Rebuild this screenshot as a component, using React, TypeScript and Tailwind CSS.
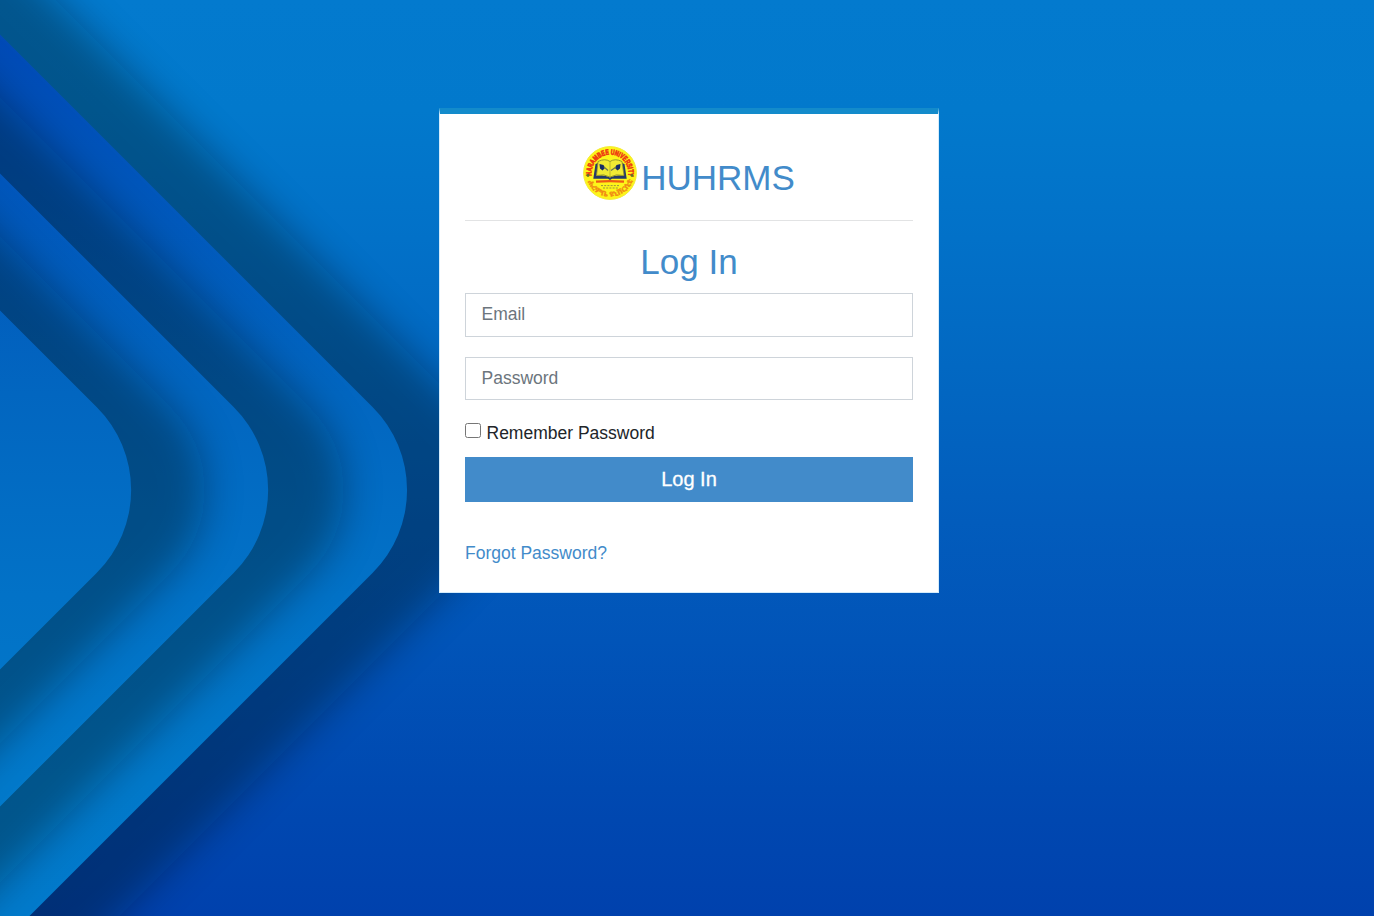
import React from "react";

// `cast` is how far to the right each chevron throws its shadow.
const CHEVRONS = [
  { id: "outer", apex: 455.5, cast: 90 },
  { id: "middle", apex: 316.6, cast: 76 },
  { id: "inner", apex: 179.6, cast: 74 },
];

// A right-pointing corner, rounded with a radius of 117, closed far off to the left.
function chevronPath(apex: number) {
  const tx = apex - 83;
  return `M${apex - 900} -410 L${tx} 407 A117 117 0 0 1 ${tx} 573 L${apex - 900} 1390 Z`;
}

function Backdrop() {
  return (
    <svg className="absolute inset-0 h-[916px] w-[1374px]" viewBox="0 0 1374 916" aria-hidden="true">
      <defs>
        <linearGradient id="sky" gradientUnits="userSpaceOnUse" x1="0" y1="0" x2="0" y2="916">
          <stop offset="0" stopColor="#037ace" />
          <stop offset="0.12" stopColor="#0279cc" />
          <stop offset="0.26" stopColor="#0271c8" />
          <stop offset="0.4" stopColor="#0268c2" />
          <stop offset="0.57" stopColor="#025cbc" />
          <stop offset="0.7" stopColor="#0154b8" />
          <stop offset="0.86" stopColor="#0049b1" />
          <stop offset="1" stopColor="#0041ad" />
        </linearGradient>
        <linearGradient id="band" gradientUnits="userSpaceOnUse" x1="0" y1="0" x2="0" y2="916">
          <stop offset="0" stopColor="#0047b5" />
          <stop offset="0.2" stopColor="#0156bb" />
          <stop offset="0.43" stopColor="#0266c0" />
          <stop offset="0.65" stopColor="#0272c7" />
          <stop offset="0.85" stopColor="#0279ca" />
          <stop offset="1" stopColor="#027acb" />
        </linearGradient>
        <filter id="soft" filterUnits="userSpaceOnUse" x="-300" y="-300" width="1100" height="1600">
          <feGaussianBlur stdDeviation="19" />
        </filter>
      </defs>
      <rect width="1374" height="916" fill="url(#sky)" />
      {CHEVRONS.map((c) => (
        <g key={c.id}>
          <g opacity="0.33">
            <path d={chevronPath(c.apex + c.cast)} fill="#00080a" filter="url(#soft)" />
          </g>
          <path d={chevronPath(c.apex)} fill="url(#band)" />
        </g>
      ))}
    </svg>
  );
}

function Logo() {
  return (
    <svg className="h-[54px] w-[54px] shrink-0" viewBox="0 0 54 54" role="img">
      <defs>
        <path id="arcTop" d="M8.8 30.5 A18.5 18.5 0 1 1 45.2 30.5" />
        <path id="arcBottom" d="M4 33.5 A24 24 0 0 0 50 33.5" />
      </defs>
      <circle cx="27" cy="27" r="26.4" fill="#fdf51a" stroke="#f3ec3c" strokeWidth="1" />
      <text fill="#ee3a12" stroke="#ee3a12" strokeWidth="0.7" fontSize="7.6" className="font-['Liberation_Sans',sans-serif] font-bold">
        <textPath href="#arcTop" startOffset="1" textLength="63" lengthAdjust="spacingAndGlyphs">
          HARAMBEE UNIVERSITY
        </textPath>
      </text>
      <path d="M12.5 18 L10.3 32.8 H25 L27 34 L29 32.8 H43.7 L41.5 18 L39 17 L41 30 Q33 28.5 27 31.5 Q21 28.5 13.5 30 L15 17Z" fill="#263a68" />
      <path d="M15 15.5 Q22 12 27 15.5 Q32 12 39 15.5 L41 29.5 Q33 27.5 27 31 Q21 27.5 13.5 29.5Z" fill="#f1ea33" stroke="#82812c" strokeWidth="0.8" />
      <path d="M27 15.5 V31" stroke="#a8a22d" strokeWidth="0.7" />
      <path d="M16.5 18 L20.5 19 L22 22 L19.5 24.5 L17 22.5Z M37.5 18 L33.5 19 L32 22 L34.5 24.5 L37 22.5Z" fill="#162c66" />
      <path d="M21 21 L25 24.5 M33 21 L28 24.5" stroke="#6b7550" strokeWidth="1.2" />
      <path d="M13 35.6 Q27 34.6 41 35.6" stroke="#ee5b14" strokeWidth="2.4" fill="none" />
      <path d="M18 39.6 H37 M20 42 H35" stroke="#9c9440" strokeWidth="1" strokeDasharray="2 1.2" />
      <circle cx="5" cy="29.5" r="1.4" fill="#5f722d" />
      <circle cx="49" cy="29.5" r="1.4" fill="#5f722d" />
      <text fill="#f08a14" stroke="#f08a14" strokeWidth="0.3" fontSize="6.8" className="font-['Noto_Sans_Ethiopic','Noto_Sans',sans-serif] font-bold">
        <textPath href="#arcBottom" startOffset="2" textLength="58" lengthAdjust="spacingAndGlyphs">
          ሐረምቤ ዩኒቨርሲቲ
        </textPath>
      </text>
    </svg>
  );
}

export default function App() {
  return (
    <main className="relative h-[916px] w-full overflow-hidden bg-[#015bbc] font-['Liberation_Sans',Arial,sans-serif] text-[17.5px] text-[#212529]">
      <Backdrop />
      <section className="relative ml-[439px] mt-[108px] flex h-[485px] w-[500px] flex-col border border-t-[6px] border-[#d5ecfb] border-t-[#138bcb] bg-white px-[25px]">
        <header className="flex h-[107px] shrink-0 justify-center border-b border-[#e2e3e4] pt-8 text-[#428bca]">
          <Logo />
          <h1 className="ml-[4px] mt-[11px] text-[35px] leading-[42px]">HUHRMS</h1>
        </header>
        <form className="flex flex-col" onSubmit={(e) => e.preventDefault()}>
          <h2 className="mt-5 text-center text-[35px] leading-[42px] text-[#428bca]">Log In</h2>
          <input
            type="email"
            placeholder="Email"
            className="mt-[10px] h-11 w-full border border-[#ced4da] px-[15.5px] pb-[2px] placeholder:text-[#6c757d]"
          />
          <input
            type="password"
            placeholder="Password"
            className="mt-5 h-[43px] w-full border border-[#ced4da] px-[15.5px] placeholder:text-[#6c757d]"
          />
          <label className="mt-5 flex h-[26px] items-start leading-[26px]">
            <input
              type="checkbox"
              className="mt-[3px] h-[15px] w-[16px] appearance-none rounded-[2.5px] border border-[#767676] bg-white"
            />
            <span className="ml-[5.5px]">Remember Password</span>
          </label>
          <button
            type="submit"
            className="mt-[11px] h-[45px] w-full bg-[#428bca] pb-[2px] text-[20px] text-white [-webkit-text-stroke:0.3px_white]"
          >
            Log In
          </button>
        </form>
        <a href="#" className="mt-[38px] self-start leading-[26px] text-[#428bca]">
          Forgot Password?
        </a>
      </section>
    </main>
  );
}
